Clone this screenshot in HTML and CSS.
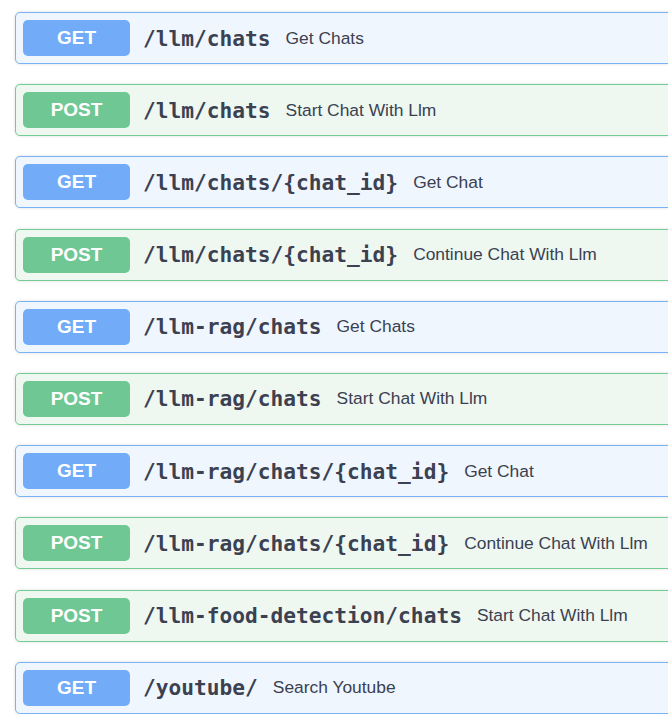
FILE: index.html
```html
<!DOCTYPE html>
<html>
<head>
<meta charset="utf-8">
<link rel="stylesheet" href="styles.css">
</head>
<body>
<div class="ops">
  <div class="op get"><span class="method">GET</span><span class="path">/llm/chats</span><span class="desc">Get Chats</span></div>
  <div class="op post"><span class="method">POST</span><span class="path">/llm/chats</span><span class="desc">Start Chat With Llm</span></div>
  <div class="op get"><span class="method">GET</span><span class="path">/llm/chats/{chat_id}</span><span class="desc">Get Chat</span></div>
  <div class="op post"><span class="method">POST</span><span class="path">/llm/chats/{chat_id}</span><span class="desc">Continue Chat With Llm</span></div>
  <div class="op get"><span class="method">GET</span><span class="path">/llm-rag/chats</span><span class="desc">Get Chats</span></div>
  <div class="op post"><span class="method">POST</span><span class="path">/llm-rag/chats</span><span class="desc">Start Chat With Llm</span></div>
  <div class="op get"><span class="method">GET</span><span class="path">/llm-rag/chats/{chat_id}</span><span class="desc">Get Chat</span></div>
  <div class="op post"><span class="method">POST</span><span class="path">/llm-rag/chats/{chat_id}</span><span class="desc">Continue Chat With Llm</span></div>
  <div class="op post"><span class="method">POST</span><span class="path">/llm-food-detection/chats</span><span class="desc">Start Chat With Llm</span></div>
  <div class="op get"><span class="method">GET</span><span class="path">/youtube/</span><span class="desc">Search Youtube</span></div>
</div>
</body>
</html>
```
FILE: styles.css
```css
html, body {
  margin: 0;
  padding: 0;
  background: #ffffff;
  overflow: hidden;
}
.ops {
  padding: 12px 0 0 15px;
  display: flex;
  flex-direction: column;
  gap: 20.2px;
  width: 680px;
}
.op {
  display: flex;
  align-items: center;
  height: 52px;
  box-sizing: border-box;
  padding: 0 7px;
  border: 1px solid;
  border-radius: 5px;
  box-shadow: 0 0 3px rgba(0, 0, 0, 0.15);
}
.op.get {
  background: #eff6fe;
  border-color: #7ab3f5;
}
.op.post {
  background: #eef8f1;
  border-color: #72cd94;
}
.method {
  width: 107px;
  height: 36px;
  border-radius: 5px;
  display: flex;
  align-items: center;
  justify-content: center;
  color: #ffffff;
  font-family: "Liberation Sans", Arial, sans-serif;
  font-weight: bold;
  font-size: 19px;
  flex-shrink: 0;
}
.get .method { background: #72abf7; }
.post .method { background: #6fc794; }
.path {
  margin-left: 13px;
  font-family: "DejaVu Sans Mono", monospace;
  font-weight: bold;
  font-size: 21.2px;
  color: #3b4151;
  white-space: nowrap;
}
.desc {
  margin-left: 15px;
  font-family: "Liberation Sans", Arial, sans-serif;
  font-size: 17.4px;
  color: #3b4151;
  white-space: nowrap;
}
```
